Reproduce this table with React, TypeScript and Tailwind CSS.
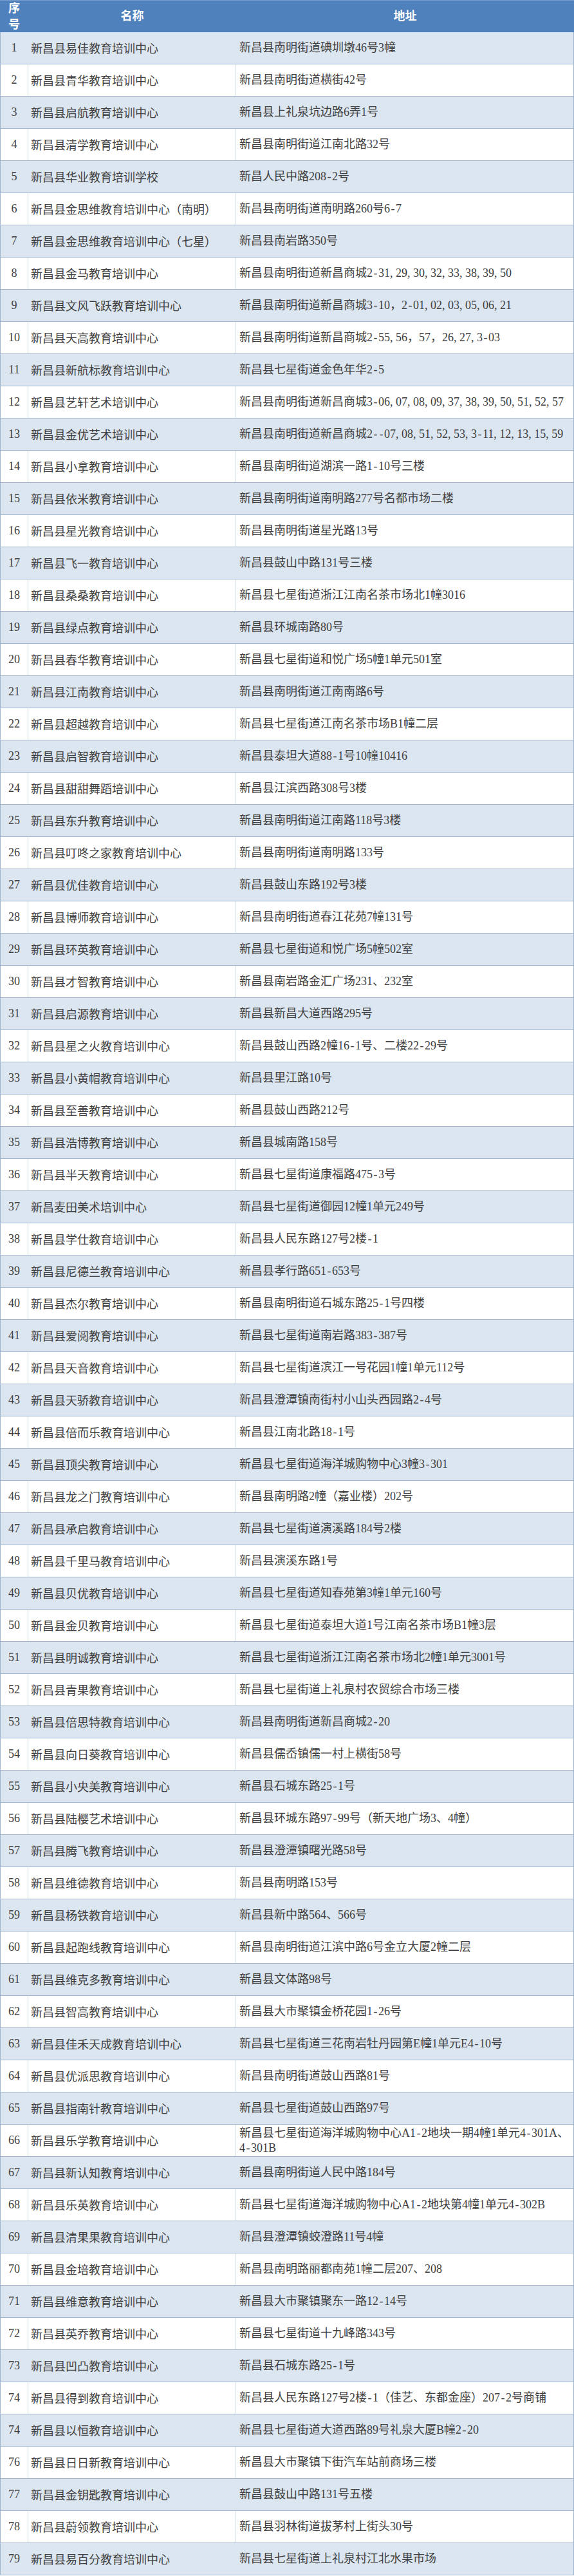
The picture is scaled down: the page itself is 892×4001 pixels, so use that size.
const rows: [string, string, string][] = [
  ["1", "新昌县易佳教育培训中心", "新昌县南明街道碘圳墩46号3幢"],
  ["2", "新昌县青华教育培训中心", "新昌县南明街道横街42号"],
  ["3", "新昌县启航教育培训中心", "新昌县上礼泉坑边路6弄1号"],
  ["4", "新昌县清学教育培训中心", "新昌县南明街道江南北路32号"],
  ["5", "新昌县华业教育培训学校", "新昌人民中路208-2号"],
  ["6", "新昌县金思维教育培训中心（南明）", "新昌县南明街道南明路260号6-7"],
  ["7", "新昌县金思维教育培训中心（七星）", "新昌县南岩路350号"],
  ["8", "新昌县金马教育培训中心", "新昌县南明街道新昌商城2-31,29,30,32,33,38,39,50"],
  ["9", "新昌县文风飞跃教育培训中心", "新昌县南明街道新昌商城3-10，2-01,02,03,05,06,21"],
  ["10", "新昌县天高教育培训中心", "新昌县南明街道新昌商城2-55,56，57，26,27,3-03"],
  ["11", "新昌县新航标教育培训中心", "新昌县七星街道金色年华2-5"],
  ["12", "新昌县艺轩艺术培训中心", "新昌县南明街道新昌商城3-06,07,08,09,37,38,39,50,51,52,57"],
  ["13", "新昌县金优艺术培训中心", "新昌县南明街道新昌商城2--07,08,51,52,53,3-11,12,13,15,59"],
  ["14", "新昌县小拿教育培训中心", "新昌县南明街道湖滨一路1-10号三楼"],
  ["15", "新昌县依米教育培训中心", "新昌县南明街道南明路277号名都市场二楼"],
  ["16", "新昌县星光教育培训中心", "新昌县南明街道星光路13号"],
  ["17", "新昌县飞一教育培训中心", "新昌县鼓山中路131号三楼"],
  ["18", "新昌县桑桑教育培训中心", "新昌县七星街道浙江江南名茶市场北1幢3016"],
  ["19", "新昌县绿点教育培训中心", "新昌县环城南路80号"],
  ["20", "新昌县春华教育培训中心", "新昌县七星街道和悦广场5幢1单元501室"],
  ["21", "新昌县江南教育培训中心", "新昌县南明街道江南南路6号"],
  ["22", "新昌县超越教育培训中心", "新昌县七星街道江南名茶市场B1幢二层"],
  ["23", "新昌县启智教育培训中心", "新昌县泰坦大道88-1号10幢10416"],
  ["24", "新昌县甜甜舞蹈培训中心", "新昌县江滨西路308号3楼"],
  ["25", "新昌县东升教育培训中心", "新昌县南明街道江南路118号3楼"],
  ["26", "新昌县叮咚之家教育培训中心", "新昌县南明街道南明路133号"],
  ["27", "新昌县优佳教育培训中心", "新昌县鼓山东路192号3楼"],
  ["28", "新昌县博师教育培训中心", "新昌县南明街道春江花苑7幢131号"],
  ["29", "新昌县环英教育培训中心", "新昌县七星街道和悦广场5幢502室"],
  ["30", "新昌县才智教育培训中心", "新昌县南岩路金汇广场231、232室"],
  ["31", "新昌县启源教育培训中心", "新昌县新昌大道西路295号"],
  ["32", "新昌县星之火教育培训中心", "新昌县鼓山西路2幢16-1号、二楼22-29号"],
  ["33", "新昌县小黄帽教育培训中心", "新昌县里江路10号"],
  ["34", "新昌县至善教育培训中心", "新昌县鼓山西路212号"],
  ["35", "新昌县浩博教育培训中心", "新昌县城南路158号"],
  ["36", "新昌县半天教育培训中心", "新昌县七星街道康福路475-3号"],
  ["37", "新昌麦田美术培训中心", "新昌县七星街道御园12幢1单元249号"],
  ["38", "新昌县学仕教育培训中心", "新昌县人民东路127号2楼-1"],
  ["39", "新昌县尼德兰教育培训中心", "新昌县孝行路651-653号"],
  ["40", "新昌县杰尔教育培训中心", "新昌县南明街道石城东路25-1号四楼"],
  ["41", "新昌县爱阅教育培训中心", "新昌县七星街道南岩路383-387号"],
  ["42", "新昌县天音教育培训中心", "新昌县七星街道滨江一号花园1幢1单元112号"],
  ["43", "新昌县天骄教育培训中心", "新昌县澄潭镇南街村小山头西园路2-4号"],
  ["44", "新昌县倍而乐教育培训中心", "新昌县江南北路18-1号"],
  ["45", "新昌县顶尖教育培训中心", "新昌县七星街道海洋城购物中心3幢3-301"],
  ["46", "新昌县龙之门教育培训中心", "新昌县南明路2幢（嘉业楼）202号"],
  ["47", "新昌县承启教育培训中心", "新昌县七星街道演溪路184号2楼"],
  ["48", "新昌县千里马教育培训中心", "新昌县演溪东路1号"],
  ["49", "新昌县贝优教育培训中心", "新昌县七星街道知春苑第3幢1单元160号"],
  ["50", "新昌县金贝教育培训中心", "新昌县七星街道泰坦大道1号江南名茶市场B1幢3层"],
  ["51", "新昌县明诚教育培训中心", "新昌县七星街道浙江江南名茶市场北2幢1单元3001号"],
  ["52", "新昌县青果教育培训中心", "新昌县七星街道上礼泉村农贸综合市场三楼"],
  ["53", "新昌县倍思特教育培训中心", "新昌县南明街道新昌商城2-20"],
  ["54", "新昌县向日葵教育培训中心", "新昌县儒岙镇儒一村上横街58号"],
  ["55", "新昌县小央美教育培训中心", "新昌县石城东路25-1号"],
  ["56", "新昌县陆樱艺术培训中心", "新昌县环城东路97-99号（新天地广场3、4幢）"],
  ["57", "新昌县腾飞教育培训中心", "新昌县澄潭镇曙光路58号"],
  ["58", "新昌县维德教育培训中心", "新昌县南明路153号"],
  ["59", "新昌县杨铁教育培训中心", "新昌县新中路564、566号"],
  ["60", "新昌县起跑线教育培训中心", "新昌县南明街道江滨中路6号金立大厦2幢二层"],
  ["61", "新昌县维克多教育培训中心", "新昌县文体路98号"],
  ["62", "新昌县智高教育培训中心", "新昌县大市聚镇金桥花园1-26号"],
  ["63", "新昌县佳禾天成教育培训中心", "新昌县七星街道三花南岩牡丹园第E幢1单元E4-10号"],
  ["64", "新昌县优派思教育培训中心", "新昌县南明街道鼓山西路81号"],
  ["65", "新昌县指南针教育培训中心", "新昌县七星街道鼓山西路97号"],
  ["66", "新昌县乐学教育培训中心", "新昌县七星街道海洋城购物中心A1-2地块一期4幢1单元4-301A、4-301B"],
  ["67", "新昌县新认知教育培训中心", "新昌县南明街道人民中路184号"],
  ["68", "新昌县乐英教育培训中心", "新昌县七星街道海洋城购物中心A1-2地块第4幢1单元4-302B"],
  ["69", "新昌县清果果教育培训中心", "新昌县澄潭镇蛟澄路11号4幢"],
  ["70", "新昌县金培教育培训中心", "新昌县南明路丽都南苑1幢二层207、208"],
  ["71", "新昌县维意教育培训中心", "新昌县大市聚镇聚东一路12-14号"],
  ["72", "新昌县英乔教育培训中心", "新昌县七星街道十九峰路343号"],
  ["73", "新昌县凹凸教育培训中心", "新昌县石城东路25-1号"],
  ["74", "新昌县得到教育培训中心", "新昌县人民东路127号2楼-1（佳艺、东都金座）207-2号商铺"],
  ["74", "新昌县以恒教育培训中心", "新昌县七星街道大道西路89号礼泉大厦B幢2-20"],
  ["76", "新昌县日日新教育培训中心", "新昌县大市聚镇下街汽车站前商场三楼"],
  ["77", "新昌县金钥匙教育培训中心", "新昌县鼓山中路131号五楼"],
  ["78", "新昌县蔚领教育培训中心", "新昌县羽林街道拔茅村上街头30号"],
  ["79", "新昌县易百分教育培训中心", "新昌县七星街道上礼泉村江北水果市场"],
];

// the source sheet uses half-width punctuation, so commas and hyphens get a digit-wide box
function Addr({ text }: { text: string }) {
  const parts = text.split(/([,-])/);
  return (
    <span>
      {parts.map((p, i) =>
        p === "," ? (
          <span key={i} className="inline-block w-[9px]">,</span>
        ) : p === "-" ? (
          <span key={i} className="inline-block w-[9px] text-center">-</span>
        ) : (
          p
        )
      )}
    </span>
  );
}

export default function App() {
  return (
    <div className="w-[892px] bg-white font-['Liberation_Serif','Noto_Sans_CJK_SC',serif] text-[18px] text-[#404040]">
      {/* Header */}
      <div className="flex h-[50px] bg-[#4f81bd] text-white font-bold border-t border-[#7a9fcf]">
        <div className="w-[44px] flex flex-col items-center justify-center leading-[25px]">
          <span>序</span>
          <span>号</span>
        </div>
        <div className="w-[323px] flex items-center justify-center">名称</div>
        <div className="flex-1 flex items-center justify-center">地址</div>
      </div>

      {/* Rows */}
      <div className="border-l border-r border-[#9fb4cf]">
        {rows.map(([no, name, addr], i) => {
          const band = i % 2 === 0;
          return (
            <div
              key={i}
              className={`flex h-[50px] border-b border-[#a3b6cf] ${band ? "bg-[#dce6f1]" : "bg-white"}`}
            >
              <div
                className={`w-[43px] shrink-0 flex items-center justify-center border-r ${band ? "border-[#dce6f1]" : "border-[#d3dbe7]"}`}
              >
                {no}
              </div>
              <div
                className={`w-[323px] shrink-0 flex items-center pl-[4px] whitespace-nowrap font-['Noto_Sans_CJK_SC',sans-serif] leading-[25px] border-r ${band ? "border-[#dce6f1]" : "border-[#d3dbe7]"}`}
              >
                <span>{name}</span>
              </div>
              <div className="flex-1 flex items-center pl-[5px] leading-[23px]">
                <Addr text={addr} />
              </div>
            </div>
          );
        })}
      </div>
    </div>
  );
}
